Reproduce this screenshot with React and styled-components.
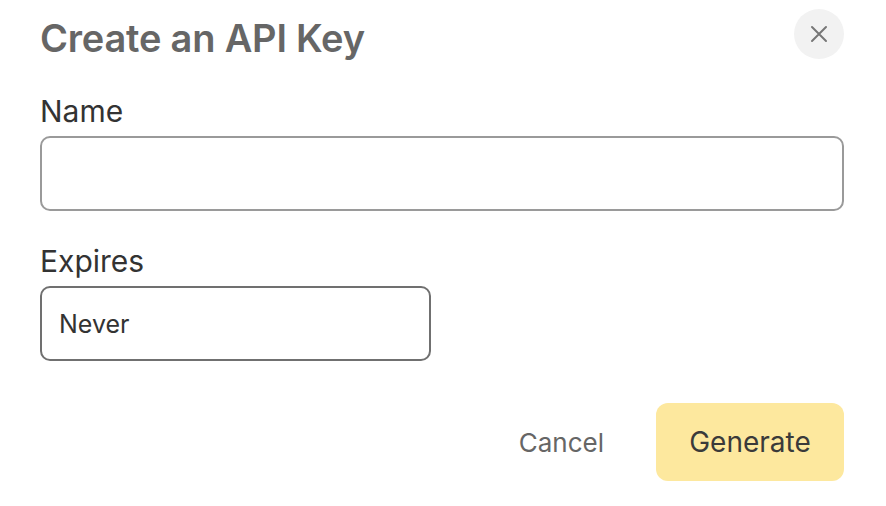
import React from "react";
import styled, { createGlobalStyle } from "styled-components";

const Global = createGlobalStyle`
  html, body { margin: 0; padding: 0; background: #ffffff; }
  body { font-family: Inter, "Noto Sans", sans-serif; -webkit-font-smoothing: antialiased; }
  * { box-sizing: border-box; }
`;

const Dialog = styled.div`
  width: 886px;
  height: 506px;
  padding: 9px 42px 0 40px;
  display: flex;
  flex-direction: column;
`;

const Header = styled.div`
  display: flex;
  justify-content: space-between;
  align-items: flex-start;
  height: 85px;
`;

const Title = styled.h1`
  margin: 7px 0 0 0;
  font-size: 38px;
  line-height: 44px;
  font-weight: 600;
  color: #666666;
  letter-spacing: -0.2px;
`;

const CloseButton = styled.button`
  width: 50px;
  height: 50px;
  border-radius: 50%;
  border: none;
  background: #f2f2f2;
  display: flex;
  align-items: center;
  justify-content: center;
  padding: 0;
  cursor: pointer;
`;

const Field = styled.div`
  display: flex;
  flex-direction: column;
  margin-bottom: ${(p) => p.$gap || 0}px;
`;

const Label = styled.label`
  font-size: 30px;
  line-height: 34px;
  font-weight: 400;
  color: #333333;
  margin-bottom: 8px;
`;

const Input = styled.div`
  width: ${(p) => p.$width};
  height: 75px;
  border: 2px solid ${(p) => p.$border};
  border-radius: 10px;
  display: flex;
  align-items: center;
  padding: 0 17px;
  font-size: 25px;
  color: #333333;
`;

const Actions = styled.div`
  display: flex;
  justify-content: flex-end;
  align-items: center;
  gap: 52px;
  margin-top: 42px;
`;

const TextButton = styled.button`
  border: none;
  background: none;
  padding: 0;
  font-family: inherit;
  font-size: 26px;
  font-weight: 400;
  color: #666666;
`;

const PrimaryButton = styled.button`
  width: 188px;
  height: 78px;
  border: none;
  border-radius: 12px;
  background: #fde89e;
  font-family: inherit;
  font-size: 28px;
  font-weight: 400;
  color: #3a3a3a;
`;

export default function App() {
  return (
    <>
      <Global />
      <Dialog>
        <Header>
          <Title>Create an API Key</Title>
          <CloseButton aria-label="Close">
            <svg width="18" height="18" viewBox="0 0 18 18" fill="none">
              <path d="M2 2L16 16M16 2L2 16" stroke="#777777" strokeWidth="2" strokeLinecap="round" />
            </svg>
          </CloseButton>
        </Header>
        <Field $gap={33}>
          <Label>Name</Label>
          <Input $width="100%" $border="#9a9a9a" />
        </Field>
        <Field>
          <Label>Expires</Label>
          <Input $width="391px" $border="#707070">Never</Input>
        </Field>
        <Actions>
          <TextButton>Cancel</TextButton>
          <PrimaryButton>Generate</PrimaryButton>
        </Actions>
      </Dialog>
    </>
  );
}
